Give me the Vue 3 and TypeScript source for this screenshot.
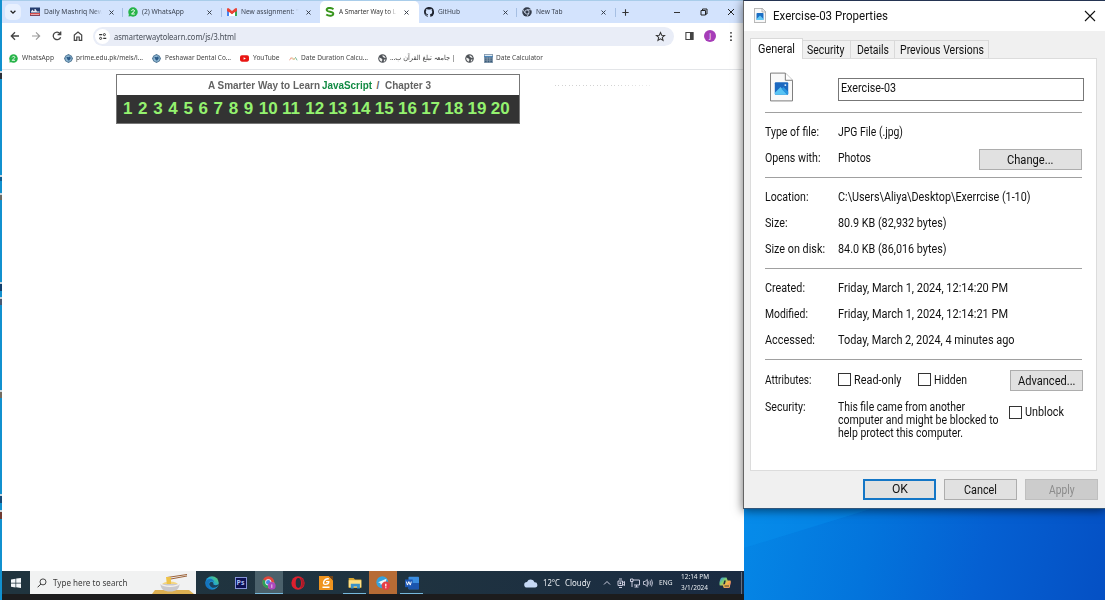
<script setup lang="ts">
import type { Directive } from 'vue'

// Condenses or stretches a run of text horizontally to the given width.
const vFit: Directive<HTMLElement, number> = {
  mounted(el, { value }) {
    const natural = el.getBoundingClientRect().width
    if (!natural) return
    el.style.transform = `scaleX(${value / natural})`
    el.style.marginRight = `${value - natural}px`
  },
}

interface Tab { icon: string; title: string; w: number; active?: boolean; sep?: boolean }
const tabs: Tab[] = [
  { icon: 'news', title: 'Daily Mashriq New', w: 59, sep: true },
  { icon: 'wa', title: '(2) WhatsApp', w: 42, sep: true },
  { icon: 'gmail', title: 'New assignment: "', w: 58 },
  { icon: 's', title: 'A Smarter Way to L', w: 57, active: true },
  { icon: 'github', title: 'GitHub', w: 22, sep: true },
  { icon: 'chrome', title: 'New Tab', w: 26.5, sep: true },
]

interface Bookmark { icon: string; title: string; w: number; cell: number; rtl?: boolean }
const bookmarks: Bookmark[] = [
  { icon: 'wa', title: 'WhatsApp', w: 32, cell: 54.5 },
  { icon: 'crest', title: 'prime.edu.pk/meis/l...', w: 67, cell: 88.5 },
  { icon: 'crest', title: 'Peshawar Dental Co...', w: 66, cell: 88 },
  { icon: 'yt', title: 'YouTube', w: 26.5, cell: 48.5 },
  { icon: 'dots', title: 'Date Duration Calcu...', w: 67, cell: 89 },
  { icon: 'globe', title: '| جامعہ تبلغ القرآن ب...', w: 65.5, cell: 87.5, rtl: true },
  { icon: 'globe', title: '', w: 0, cell: 18.5 },
  { icon: 'calc', title: 'Date Calculator', w: 47, cell: 70 },
]

const chapters = Array.from({ length: 20 }, (_, i) => i + 1)

interface Row { label: string; lw: number; value: string; vw: number; button?: boolean }
const sections: Row[][] = [
  [
    { label: 'Type of file:', lw: 54, value: 'JPG File (.jpg)', vw: 65 },
    { label: 'Opens with:', lw: 55.5, value: 'Photos', vw: 33, button: true },
  ],
  [
    { label: 'Location:', lw: 43.5, value: 'C:\\Users\\Aliya\\Desktop\\Exerrcise (1-10)', vw: 192.5 },
    { label: 'Size:', lw: 22.5, value: '80.9 KB (82,932 bytes)', vw: 108.5 },
    { label: 'Size on disk:', lw: 60, value: '84.0 KB (86,016 bytes)', vw: 108.5 },
  ],
  [
    { label: 'Created:', lw: 40, value: 'Friday, March 1, 2024, 12:14:20 PM', vw: 170 },
    { label: 'Modified:', lw: 43, value: 'Friday, March 1, 2024, 12:14:21 PM', vw: 170 },
    { label: 'Accessed:', lw: 50, value: 'Today, March 2, 2024, 4 minutes ago', vw: 176.5 },
  ],
]

const marks = [
  { top: 71, h: 8, c: '#2b3038' }, { top: 175, h: 6, c: '#0b5d92' }, { top: 193, h: 7, c: '#6d6b63' },
  { top: 282, h: 9, c: '#11406e' }, { top: 297, h: 8, c: '#4b5970' }, { top: 390, h: 8, c: '#746c60' },
  { top: 494, h: 9, c: '#174a77' }, { top: 510, h: 9, c: '#703a31' },
]
</script>

<template>
  <div class="desktop">
    <svg class="wall" viewBox="0 0 362 92" preserveAspectRatio="none">
      <path d="M0 40L130 0H0Z" fill="#0a94f2" opacity=".35" />
    </svg>
    <i v-for="m in marks" :key="m.top" class="mark" :style="{ top: m.top + 'px', height: m.h + 'px', background: m.c }" />

    <svg class="defs" width="0" height="0">
      <defs>
        <linearGradient id="edge" x1="0" y1="1" x2="1" y2="0"><stop offset="0" stop-color="#0b59b5" /><stop offset=".5" stop-color="#1da1dc" /><stop offset="1" stop-color="#62d55b" /></linearGradient>
        <linearGradient id="cop" x1="0" y1="0" x2="1" y2="1"><stop offset="0" stop-color="#2a8cf0" /><stop offset=".35" stop-color="#7fd070" /><stop offset=".6" stop-color="#f7b545" /><stop offset="1" stop-color="#e251a5" /></linearGradient>
        <symbol id="news" viewBox="0 0 20 20"><path fill="#263e70" d="M0 1h20v17H0z" /><path fill="#d34c4c" d="M0 12h20v5H0z" /><path fill="#e5e9f2" d="M2 9l3-4 2 3h2V4h2l3 5h5v2H2z" /><path fill="#fff" d="M2 14h16v1H2z" /></symbol>
        <symbol id="wa" viewBox="0 0 20 20"><circle cx="10" cy="10" r="9.5" fill="#27b449" /><path d="M1 19l1-6 5 5z" fill="#27b449" /><path d="M7 7.5c1-3 6-3 6 .3 0 2.200-6 5-6 6.200h6.500" fill="none" stroke="#fff" stroke-width="2" /></symbol>
        <symbol id="gmail" viewBox="0 0 20 16"><path fill="#4285f4" d="M0 3h4v13H0z" /><path fill="#34a853" d="M16 3h4v13h-4z" /><path fill="#ea4335" d="M0 2c1-3 3-2 4-1l6 5 6-5c1-1 4-2 4 2v3l-10 7L0 6z" /><path fill="#fff" d="M4 8l6 5 6-5v8H4z" /></symbol>
        <symbol id="s" viewBox="0 0 20 20"><path d="M17 4.500C11 0 2.500 2 3.500 6.200 4.500 11 16 8 16.500 13 17 18 8 19 2.500 15" fill="none" stroke="#38951c" stroke-width="4" /></symbol>
        <symbol id="github" viewBox="0 0 16 16"><path fill="#1f2430" d="M8 0C3.580 0 0 3.580 0 8c0 3.540 2.290 6.530 5.470 7.590.4.070.55-.17.55-.38v-1.490c-2.230.48-2.700-.94-2.700-.94-.36-.93-.89-1.170-.89-1.170-.73-.5.050-.49.050-.49.81.060 1.230.83 1.230.83.72 1.230 1.880.87 2.340.67.070-.52.280-.87.510-1.070-1.780-.2-3.640-.89-3.640-3.950 0-.87.31-1.590.82-2.150-.08-.2-.36-1.020.080-2.120 0 0 .67-.21 2.200.82a7.600 7.600 0 0 1 4 0c1.530-1.040 2.200-.82 2.200-.82.44 1.100.16 1.920.080 2.120.51.56.82 1.270.82 2.150 0 3.070-1.870 3.750-3.650 3.950.29.25.54.73.54 1.480v2.200c0 .21.150.46.550.38A8 8 0 0 0 8 0" /></symbol>
        <symbol id="chrome" viewBox="0 0 20 20"><circle cx="10" cy="10" r="9.500" fill="#333b4a" /><circle cx="10" cy="10" r="4.200" fill="#333b4a" stroke="#dce7fb" stroke-width="1.600" /><path d="M10 5.500h9M6 12L2 5M14 12l-4.500 8" stroke="#dce7fb" stroke-width="1.500" /></symbol>
        <symbol id="crest" viewBox="0 0 20 20"><path fill="#4a708f" d="M10 0l7 4 3 6-3 6-7 4-7-4-3-6 3-6z" /><circle cx="10" cy="10" r="7" fill="#8fb7d2" /><path d="M5 6l5 1 4-2 1 5-4 5-3-2z" fill="#2b5a88" /></symbol>
        <symbol id="yt" viewBox="0 0 20 20"><rect y="3" width="20" height="14" rx="4" fill="#e91512" /><path d="M8 7l5 3-5 3z" fill="#fff" /></symbol>
        <symbol id="dots" viewBox="0 0 20 20"><g fill="none" stroke-width="1.800"><path d="M1 14l4-6 3 4" stroke="#e98b72" /><path d="M8 8l3 5 2-4" stroke="#c9b56d" /><path d="M14 7l4 7" stroke="#58a886" /></g></symbol>
        <symbol id="globe" viewBox="0 0 20 20"><circle cx="10" cy="10" r="9.500" fill="#4d5156" /><path fill="#eee" d="M3 8l5 2 2 3-2 4c-4-1-6-5-5-9zM8 3c4 0 1 4 4 4s2 3 5 2c-1-4-5-7-9-6zM13 12h4c-1 3-2 4-4 5z" /></symbol>
        <symbol id="calc" viewBox="0 0 20 20"><path fill="#8a9db0" d="M0 0h20v20H0z" /><path fill="#dfebf5" d="M2 2h16v3H2z" /><path stroke="#385b79" stroke-width="2.500" stroke-dasharray="4 2" d="M2 9h17M2 13h17M2 17h17" /><path fill="#337ab7" d="M0 5h20v2H0z" /></symbol>
      </defs>
    </svg>

    <div class="browser">
      <div class="strip">
        <span class="search-tabs"><svg viewBox="0 0 10 10"><path d="M2 3.500l3 3 3-3" fill="none" stroke="#222" stroke-width="1.600" /></svg></span>
        <div v-for="t in tabs" :key="t.title" class="tab" :class="{ active: t.active, sep: t.sep }">
          <svg class="fav"><use :href="'#' + t.icon" /></svg>
          <span class="clip"><span v-fit="t.w" class="fit">{{ t.title }}</span></span>
          <svg class="x" viewBox="0 0 10 10"><path d="M1 1l8 8M9 1L1 9" fill="none" stroke="#333a46" stroke-width="1.900" /></svg>
        </div>
        <svg class="plus" viewBox="0 0 10 10"><path d="M5 1.500v7M1.500 5h7" stroke="#333" stroke-width="1.200" /></svg>
        <div class="controls">
          <svg viewBox="0 0 10 10"><path d="M2 5.500h6" stroke="#333" /></svg>
          <svg viewBox="0 0 10 10"><path d="M2 3.500h4.500V8H2zM3.500 3V2H8v5H7" fill="none" stroke="#222" /></svg>
          <svg viewBox="0 0 10 10"><path d="M2 2l6 6M8 2L2 8" stroke="#222" /></svg>
        </div>
      </div>

      <div class="toolbar">
        <svg class="nav" viewBox="0 0 12 12"><path d="M10 6H2.500M6 2.300L2.300 6 6 9.700" fill="none" stroke="#444" stroke-width="1.300" /></svg>
        <svg class="nav" viewBox="0 0 12 12"><path d="M2 6h7.500M6 2.300L9.700 6 6 9.700" fill="none" stroke="#999" stroke-width="1.100" /></svg>
        <svg class="nav" viewBox="0 0 12 12"><path d="M9.600 7.200A3.800 3.800 0 1 1 9 3.500M9.700 1.500v3H6.600" fill="none" stroke="#444" stroke-width="1.300" /></svg>
        <svg class="nav" viewBox="0 0 12 12"><path d="M2.300 10.300V5L6 2l3.700 3v5.300H7.200V7H4.800v3.300z" fill="none" stroke="#444" stroke-width="1.200" /></svg>
        <div class="omni">
          <span class="site"><svg viewBox="0 0 12 12"><path d="M1.500 3.500h4M7 8.500h4" stroke="#333" stroke-width="1.500" /><circle cx="8.500" cy="3.500" r="1.400" fill="none" stroke="#333" stroke-width="1.300" /><circle cx="3.500" cy="8.500" r="1.400" fill="none" stroke="#333" stroke-width="1.300" /></svg></span>
          <span v-fit="122" class="fit url">asmarterwaytolearn.com/js/3.html</span>
          <svg class="star" viewBox="0 0 12 12"><path d="M6 1.600l1.300 3 3.200.2L8 7l.8 3.200L6 8.500l-2.800 1.700L4 7 1.500 4.800l3.200-.2z" fill="none" stroke="#333" stroke-width="1.100" /></svg>
        </div>
        <svg class="panel" viewBox="0 0 10 10"><path d="M1 1.200h8v7.600H1z" fill="none" stroke="#444" stroke-width="1.200" /><path d="M5.500 1H9v8H5.500z" fill="#444" /></svg>
        <span class="avatar">j</span>
        <svg class="dots3" viewBox="0 0 4 12"><g fill="#333"><circle cx="2" cy="2" r="1" /><circle cx="2" cy="6" r="1" /><circle cx="2" cy="10" r="1" /></g></svg>
      </div>

      <div class="bookmarks">
        <div v-for="(b, i) in bookmarks" :key="i" class="bm" :style="{ width: b.cell + 'px' }">
          <svg><use :href="'#' + b.icon" /></svg>
          <span v-if="b.title" v-fit="b.w" class="fit" :dir="b.rtl ? 'rtl' : 'ltr'">{{ b.title }}</span>
        </div>
      </div>

      <div class="page">
        <div class="book">
          <div class="book-title">
            <b v-fit="112" class="fit">A Smarter Way to Learn</b>
            <b v-fit="50" class="fit green">JavaScript</b>
            <b class="slash">/</b>
            <b v-fit="46" class="fit">Chapter 3</b>
          </div>
          <div class="nums"><b v-for="n in chapters" :key="n">{{ n }}</b></div>
        </div>
        <i class="dotline" />
      </div>

      <div class="taskbar">
        <span class="start"><svg viewBox="0 0 10 10"><path fill="#f4f8fa" d="M0 1.400l4.500-.7v4H0zM5.200.6L10 0v4.700H5.200zM0 5.400h4.500v4L0 8.700zM5.200 5.400H10V10l-4.800-.7z" /></svg></span>
        <div class="search">
          <svg class="mag" viewBox="0 0 10 10"><circle cx="6" cy="3.900" r="3" fill="none" stroke="#333" stroke-width=".9" /><path d="M3.900 6L.6 9.300" stroke="#333" /></svg>
          <span v-fit="74.500" class="fit">Type here to search</span>
          <svg class="bowl" viewBox="0 0 42 22">
            <path d="M3 18h34l5 4H0z" fill="#ddb052" />
            <path d="M15 5.500L35 2.500M16 7.500l19-3.500" stroke="#9c6238" stroke-width="1" />
            <ellipse cx="18" cy="12.500" rx="8" ry="3" fill="#f3d583" /><path d="M14 5h5v8h-4z" fill="#eec248" />
            <path d="M8.500 12h19c0 5-3.500 7.500-9.500 7.500S8.500 17 8.500 12z" fill="#c9c8cc" /><path d="M9 12c3 3 15 3 18 0" fill="none" stroke="#f4f0eb" stroke-width="1.500" />
          </svg>
        </div>
        <span class="app edge"><svg viewBox="0 0 20 20"><circle cx="10" cy="10" r="9.700" fill="url(#edge)" /><path d="M6 12c0-5 7-5 6 0 3 2 6 1 8-1-1 6-11 9-14 1z" fill="#1b4260" /><path d="M1 8c4-6 11-5 12 1-5-4-10 1-7 8-3-1-5-5-5-9z" fill="#1674bd" /></svg></span>
        <span class="app"><span class="ps">Ps</span></span>
        <span class="app lit line"><svg viewBox="0 0 20 20"><circle cx="9" cy="9" r="8.500" fill="#e1473c" /><path d="M9 9L1.500 5A8.500 8.500 0 0 0 9 17.500z" fill="#2da15a" /><path d="M9 9h8.500A8.500 8.500 0 0 1 9 17.500z" fill="#f1c232" /><circle cx="9" cy="9" r="4" fill="#4987e7" stroke="#eee" stroke-width="1.400" /><circle cx="14" cy="14" r="5.500" fill="#ad47bc" /><path d="M14 12v5" stroke="#fff" /></svg></span>
        <span class="app"><svg viewBox="0 0 20 20"><ellipse cx="10" cy="10" rx="9.500" ry="9.700" fill="#dc202e" /><ellipse cx="10.500" cy="10" rx="3.800" ry="7" fill="#203440" /><path d="M13 2c8 3 8 13 0 16 3-5 3-11 0-16" fill="#a91b28" /></svg></span>
        <span class="app"><svg viewBox="0 0 20 20"><path fill="#ef941f" d="M0 0h14l6 6v14H0z" /><path fill="#734319" d="M14 0h6v6z" /><path d="M14 4c-7-1-10 8-5 8 3 0 5-1 5-4h-4M5 16h10" fill="none" stroke="#fff" stroke-width="2" /></svg></span>
        <span class="app run"><svg viewBox="0 0 20 20"><path fill="#d8a52e" d="M1 3h7l2 2h9v12H1z" /><path fill="#ffe083" d="M1 6h18v10H1z" /><path fill="#3b92c8" d="M4 11h13v7h-4v-3H8v3H4z" /></svg></span>
        <span class="app orange"><svg viewBox="0 0 20 20"><circle cx="9" cy="9" r="8.500" fill="#36a3dc" /><path d="M3 9l12-5-2 10-4-3-2 2-1-3z" fill="#f1f7fa" /><circle cx="14" cy="14" r="6" fill="#e73e46" /><path d="M14 11v4M14 16v1.500" stroke="#fff" stroke-width="1.800" /></svg></span>
        <span class="app run"><svg viewBox="0 0 20 20"><rect x="5" y="1" width="15" height="18" rx="1" fill="#3a8de0" /><path d="M5 10h15v9H5z" fill="#1b55ad" /><rect y="5" width="11" height="11" fill="#1c57b4" /><path d="M2 8l1.500 5L5.500 8l2 5L9 8" fill="none" stroke="#fff" stroke-width="1.400" /></svg></span>
        <div class="tray">
          <svg class="cloud" viewBox="0 0 14 10"><path d="M3 9.500a2.800 2.800 0 0 1 0-5.600 4 4 0 0 1 7.500.4A2.600 2.600 0 0 1 11 9.500z" fill="#c6d9f5" /></svg>
          <span v-fit="17" class="fit temp">12°C</span>
          <span v-fit="25.500" class="fit cond">Cloudy</span>
          <svg class="t1" viewBox="0 0 8 8"><path d="M1 5.500l3-3 3 3" fill="none" stroke="#dde" stroke-width=".9" /></svg>
          <svg class="t2" viewBox="0 0 8 10"><path d="M1 3h4.500v4.500H1zM2 1h3M2 9.500h3M6 4.500l1.500-1v4L6 6.500" fill="none" stroke="#dde" stroke-width=".9" /><circle cx="3.300" cy="5.200" r="1" fill="#dde" /></svg>
          <svg class="t3" viewBox="0 0 10 10"><path d="M3 2h6.500v5H4M6.500 7v2M4.500 9h4M.5 1H3v2.500H.5zM2 3.500V9" fill="none" stroke="#dde" stroke-width=".9" /></svg>
          <svg class="t4" viewBox="0 0 10 10"><path d="M.5 3.500H2L4.300 1.500v7L2 6.500H.5zM5.500 3.500q1 1.500 0 3M7 2.500q1.800 2.500 0 5M8.500 1.500q2 3.500 0 7" fill="none" stroke="#dde" stroke-width=".8" /></svg>
          <span v-fit="13.500" class="fit eng">ENG</span>
          <span class="clock"><span v-fit="28" class="fit">12:14 PM</span><span v-fit="27" class="fit">3/1/2024</span></span>
          <svg class="cop" viewBox="0 0 12 12"><path d="M3 .5h4.500l1.200 3H11c1.800 0 .5 5-1 7.500H5L4 8.500H1.200C-.5 8.500 1 .5 3 .5z" fill="url(#cop)" /><path d="M5.200 3.500h1.600L5.800 7.500H4.200z" fill="#1c2d43" /><path d="M4.500 7.500H11v3H4.500z" fill="#e8b44c" /><path d="M5.500 9h4.500" stroke="#4b3930" /></svg>
          <i class="peek" />
        </div>
      </div>
      <div class="bezel" />
    </div>

    <div class="dialog">
      <div class="caption">
        <svg class="file" viewBox="0 0 24 30"><path d="M.7.7h15.600l7 7v21.600H.700z" fill="#f8f8f8" stroke="#8b8b8b" stroke-width="1.400" /><path d="M16 1v7h7" fill="none" stroke="#8b8b8b" stroke-width="1.200" /><rect x="5" y="10" width="14" height="14" rx="1.500" fill="#1c6fc4" /><path d="M5 22l7-7 7 7v2H5z" fill="#63c8f5" /></svg>
        <span v-fit="115" class="fit">Exercise-03 Properties</span>
        <svg class="close" viewBox="0 0 12 12"><path d="M1 1l10 10M11 1L1 11" stroke="#111" stroke-width="1.100" /></svg>
      </div>
      <div class="ptabs">
        <span class="ptab on"><span v-fit="37" class="fit">General</span></span>
        <span class="ptab sec"><span v-fit="37.500" class="fit">Security</span></span>
        <span class="ptab det"><span v-fit="32" class="fit">Details</span></span>
        <span class="ptab prev"><span v-fit="84" class="fit">Previous Versions</span></span>
      </div>
      <div class="sheet">
        <div class="head">
          <svg class="bigfile" viewBox="0 0 24 30"><path d="M.5.5h15.500l7.500 7.500v21.500H.5z" fill="#f9f9f9" stroke="#777" /><path d="M16 .5V8h7.500" fill="#fff" stroke="#777" /><rect x="5" y="10" width="14" height="13" rx="1" fill="#1b68c0" /><path d="M5 21l6-6 7 8H6a1 1 0 0 1-1-1z" fill="#58c3f3" /><path d="M12 17l2-2 5 5v2a1 1 0 0 1-1 1z" fill="#2895df" /><circle cx="16" cy="13" r="1" fill="#e5f4fc" /></svg>
          <div class="name"><span v-fit="55" class="fit">Exercise-03</span></div>
        </div>
        <div v-for="(s, i) in sections" :key="i" class="section">
          <div v-for="r in s" :key="r.label" class="row">
            <span class="label"><span v-fit="r.lw" class="fit">{{ r.label }}</span></span>
            <span v-fit="r.vw" class="fit">{{ r.value }}</span>
            <span v-if="r.button" class="btn change"><span v-fit="46.500" class="fit">Change...</span></span>
          </div>
        </div>
        <div class="section attrs">
          <div class="row arow">
            <span class="label up"><span v-fit="46.500" class="fit">Attributes:</span></span>
            <span class="check up"><i /><span v-fit="47.500" class="fit">Read-only</span></span>
            <span class="check hid up"><i /><span v-fit="33" class="fit">Hidden</span></span>
            <span class="btn adv"><span v-fit="57.500" class="fit">Advanced...</span></span>
          </div>
          <div class="security">
            <span class="label"><span v-fit="40.500" class="fit">Security:</span></span>
            <div class="note">
              <span v-fit="127" class="fit">This file came from another</span>
              <span v-fit="160.500" class="fit">computer and might be blocked to</span>
              <span v-fit="125" class="fit">help protect this computer.</span>
            </div>
            <span class="check unb"><i /><span v-fit="39" class="fit">Unblock</span></span>
          </div>
        </div>
      </div>
      <div class="actions">
        <span class="btn ok"><span v-fit="16" class="fit">OK</span></span>
        <span class="btn"><span v-fit="33" class="fit">Cancel</span></span>
        <span class="btn off"><span v-fit="25.500" class="fit">Apply</span></span>
      </div>
    </div>
  </div>
</template>

<style>
html, body { margin: 0; overflow: hidden; }
</style>

<style scoped>
* { box-sizing: border-box; }
.desktop { position: relative; width: 1105px; height: 600px; overflow: hidden; background: #1191cf; font-family: "Noto Sans", "DejaVu Sans", sans-serif; }
.fit { display: inline-block; white-space: pre; transform-origin: 0 50%; flex: none; }
svg { display: block; flex: none; }
.defs { position: absolute; }
.wall { position: absolute; left: 744px; top: 508px; width: 361px; height: 92px; background: linear-gradient(102deg, #0587e6 0%, #0374dc 35%, #0560d2 65%, #0550c4 100%); }
.mark { position: absolute; left: 0; width: 2px; border-top: 2px solid #c9d5dc; }

.browser { position: absolute; left: 2px; top: 0; width: 742px; height: 600px; background: #fff; display: flex; flex-direction: column; }
.strip { height: 23px; background: #d3e3fd; border-top: 1px solid #a9cdea; display: flex; align-items: center; flex: none; }
.search-tabs { width: 16px; height: 16px; margin: 0 3.500px 0 3px; border-radius: 5px; background: #e8f0fe; display: grid; place-items: center; }
.search-tabs svg { width: 8px; height: 8px; }
.tab { width: 98.500px; height: 22px; padding-left: 5px; display: flex; align-items: center; font-size: 7px; color: #3c4452; position: relative; }
.tab.sep::after { content: ""; position: absolute; right: 0; top: 7px; height: 9px; width: 1px; background: #a6bfe3; }
.tab.active { background: #fff; border-radius: 5px 5px 0 0; color: #333; }
.fav { width: 10px; height: 10px; margin-right: 4px; }
.clip { width: 59px; overflow: hidden; height: 12px; line-height: 12px; mask-image: linear-gradient(90deg, #000 84%, transparent 98%); }
.x { width: 5px; height: 5px; margin-left: 6px; }
.plus { width: 9px; height: 9px; margin-left: 5px; }
.controls { margin-left: auto; padding-right: 8.500px; display: flex; gap: 17px; }
.controls svg { width: 10px; height: 10px; }

.toolbar { height: 26px; display: flex; align-items: center; padding-left: 7px; flex: none; }
.nav { width: 12px; height: 12px; margin-right: 8.900px; }
.omni { width: 581px; height: 19px; margin-left: 0; border-radius: 10px; background: #e9edf7; display: flex; align-items: center; padding: 0 8px 0 2px; }
.site { width: 15px; height: 15px; border-radius: 8px; background: #fff; display: grid; place-items: center; margin-right: 4px; }
.site svg { width: 9px; height: 9px; }
.url { font-size: 8px; color: #444a54; }
.star { width: 11px; height: 11px; margin-left: auto; }
.panel { width: 9px; height: 10px; margin-left: 11px; }
.avatar { width: 12px; height: 12px; border-radius: 50%; background: #a63db8; color: #fff; font-size: 7px; line-height: 11px; text-align: center; margin-left: 10.500px; }
.dots3 { width: 4px; height: 11px; margin-left: 13px; }

.bookmarks { height: 21px; border-bottom: 1px solid #e3e5e8; padding: 0 0 2px 7px; display: flex; align-items: center; font-size: 7px; color: #444; flex: none; }
.bm { display: flex; align-items: center; gap: 3.500px; line-height: 12px; flex: none; }
.bm svg { width: 9px; height: 9px; }

.page { flex: 1; display: flex; padding: 4px 0 0 114px; align-items: flex-start; }
.book { width: 404px; height: 50px; border: 1px solid #777; font-family: "Liberation Sans", Arial, sans-serif; }
.book-title { height: 20px; display: flex; align-items: center; padding: 1px 0 0 91px; color: #636363; font-size: 10px; }
.green { color: #118a43; margin-left: 2px; }
.slash { width: 8px; margin-left: 4.500px; }
.nums { height: 28px; background: #333; color: #94f26f; font-size: 17px; line-height: 28px; padding-left: 6px; display: grid; grid-template-columns: repeat(9, 15.100px) repeat(11, 23.200px); }
.dotline { width: 96px; height: 1px; margin: 11px 0 0 35px; background: repeating-linear-gradient(90deg, #d2d2d2 0 1px, transparent 1px 3.500px); mask-image: linear-gradient(90deg, #000 60%, #0006); }

.taskbar { height: 23px; display: flex; background: linear-gradient(90deg, #20343e, #1f3340 55%, #1a2b42); flex: none; }
.start { width: 28px; display: grid; place-items: center; }
.start svg { width: 10px; height: 10px; }
.search { width: 166px; background: #f1f2f2; display: flex; align-items: center; padding-left: 7px; color: #3d3d3d; font-size: 9px; }
.mag { width: 10px; height: 10px; margin-right: 6px; }
.bowl { width: 42px; height: 22px; margin: 1px 2px 0 auto; }
.app { width: 28.500px; display: grid; place-items: center; }
.app.edge { margin-left: 1.800px; }
.app svg { width: 14px; height: 14px; }
.app.lit { background: #4b616b; }
.app.orange { background: #b76c35; }
.app.line, .app.run { background-repeat: no-repeat; background-position: 50% 100%; background-image: linear-gradient(#76b9dc, #76b9dc); background-size: 100% 1px; }
.app.run { background-size: 23px 1px; }
.ps { width: 12px; height: 12px; background: #0c1053; border: 1px solid #8794d8; color: #a8bdf4; font: bold 7px/10px "Noto Sans", sans-serif; text-align: center; }
.tray { margin-left: auto; display: flex; align-items: center; color: #e9edf1; font-size: 8px; }
.cloud { width: 14px; height: 10px; margin-right: 5px; }
.cond { margin-left: 5px; }
.t1 { width: 8px; height: 8px; margin-left: 12.500px; }
.t2 { width: 8px; height: 10px; margin-left: 6px; }
.t3 { width: 10px; height: 10px; margin-left: 5px; }
.t4 { width: 10px; height: 10px; margin-left: 3.500px; }
.eng { font-size: 7px; margin-left: 5.500px; }
.clock { width: 28px; margin-left: 9px; display: flex; flex-direction: column; align-items: flex-start; font-size: 7px; line-height: 10.500px; }
.cop { width: 12px; height: 12px; margin-left: 10px; }
.peek { width: 1px; height: 22px; background: #627082; margin: 0 2px 0 10px; }
.bezel { height: 6px; background: #1c1c1d; flex: none; }

.dialog { position: absolute; left: 743px; top: 0; width: 363px; height: 509px; background: #f0f0f0; border-left: 1px solid #646464; border-top: 1px solid #243452; border-bottom: 1px solid #31567b; box-shadow: -1px 2px 9px rgba(0, 0, 0, .5); font-family: Roboto, "Liberation Sans", sans-serif; font-size: 12px; color: #111; display: flex; flex-direction: column; }
.caption { height: 30px; background: #fff; display: flex; align-items: center; padding: 0 10px 1px 10px; }
.file { width: 12px; height: 15px; margin-right: 7px; }
.close { width: 12px; height: 12px; margin-left: auto; }
.ptabs { height: 27px; padding: 6px 0 0 6px; display: flex; align-items: flex-end; }
.ptab { height: 18px; border: 1px solid #d9d9d9; border-left: 0; border-bottom: 0; display: grid; place-items: center; }
.ptab.on { height: 21px; width: 53px; background: #fff; border-left: 1px solid #d9d9d9; margin-bottom: -1px; z-index: 1; padding-bottom: 1px; }
.sec { width: 48px; padding-right: 2px; }
.det { width: 44px; }
.prev { width: 94px; }
.sheet { margin-left: 6px; width: 347px; height: 413px; background: #fff; border: 1px solid #dcdcdc; padding: 0 14px; }
.head { height: 53px; display: flex; align-items: flex-start; padding: 13px 0 0 5px; }
.bigfile { width: 23px; height: 30px; }
.name { width: 246px; height: 23px; border: 1px solid #777; margin: 6px -3px 0 45px; padding-left: 2px; line-height: 18px; flex: none; }
.section { width: 317px; border-top: 1px solid #a0a0a0; padding: 6px 0; }
.row { height: 26px; display: flex; align-items: center; line-height: 16px; }
.label { width: 73px; flex: none; }
.btn { width: 73px; height: 21px; border: 1px solid #adadad; background: #e1e1e1; display: grid; place-items: center; line-height: 18px; padding-top: 1px; flex: none; }
.change { width: 103px; margin: 3px 0 0 auto; }
.attrs { padding-top: 7px; }
.arow { height: 27px; }
.up { margin-bottom: 2px; }
.check { display: flex; align-items: center; gap: 3px; line-height: 16px; }
.check i { width: 13px; height: 13px; border: 1px solid #333; background: #fff; flex: none; }
.hid { margin-left: 16.500px; }
.adv { margin: 0 -1px 0 auto; }
.security { display: flex; align-items: flex-start; line-height: 13px; padding-top: 7px; }
.note { width: 171px; display: flex; flex-direction: column; align-items: flex-start; }
.unb { margin-top: 3px; }
.actions { display: flex; gap: 8px; justify-content: flex-end; padding: 8px 8px 0 0; }
.ok { border: 2px solid #1476c6; padding-top: 0; line-height: 17px; }
.off { background: #cccccc; border-color: #bfbfbf; color: #8b8b8b; }
</style>
